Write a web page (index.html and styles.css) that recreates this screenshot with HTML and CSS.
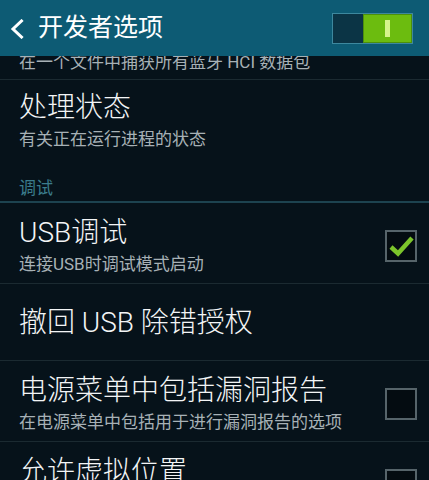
FILE: index.html
```html
<!DOCTYPE html>
<html lang="zh-CN">
<head>
<meta charset="utf-8">
<title>开发者选项</title>
<link rel="stylesheet" href="styles.css">
</head>
<body>
<div class="screen">
  <header class="appbar">
    <svg class="back" width="14" height="20" viewBox="0 0 14 20"><path d="M11.5 2 L3 10 L11.5 18" fill="none" stroke="#ffffff" stroke-width="3" stroke-linecap="square"/></svg>
    <h1 class="title">开发者选项</h1>
    <div class="switch">
      <div class="switch-off"></div>
      <div class="switch-on"><span class="switch-bar"></span></div>
    </div>
  </header>
  <div class="list">
    <div class="item clip-row">
      <div class="sub">在一个文件中捕获所有蓝牙 HCI 数据包</div>
    </div>
    <div class="item no-line">
      <div class="text">
        <div class="name">处理状态</div>
        <div class="sub">有关正在运行进程的状态</div>
      </div>
    </div>
    <div class="category">调试</div>
    <div class="item">
      <div class="text">
        <div class="name">USB调试</div>
        <div class="sub">连接USB时调试模式启动</div>
      </div>
      <div class="check">
        <svg width="28" height="28" viewBox="0 0 28 28"><path d="M4 15 L11 21.5 L25 6" fill="none" stroke="#7cc52b" stroke-width="4.5" stroke-linejoin="miter"/></svg>
      </div>
    </div>
    <div class="item single">
      <div class="text">
        <div class="name">撤回 USB 除错授权</div>
      </div>
    </div>
    <div class="item">
      <div class="text">
        <div class="name">电源菜单中包括漏洞报告</div>
        <div class="sub">在电源菜单中包括用于进行漏洞报告的选项</div>
      </div>
      <div class="check"></div>
    </div>
    <div class="item">
      <div class="text">
        <div class="name">允许虚拟位置</div>
        <div class="sub">允许模拟位置</div>
      </div>
      <div class="check"></div>
    </div>
  </div>
</div>
</body>
</html>
```
FILE: styles.css
```css
html, body {
  margin: 0;
  padding: 0;
  background: #06121a;
}
body {
  width: 429px;
  height: 480px;
  overflow: hidden;
  font-family: Roboto, "Noto Sans CJK SC", sans-serif;
}
.screen {
  width: 429px;
  height: 480px;
  overflow: hidden;
  display: flex;
  flex-direction: column;
}
.appbar {
  position: relative;
  z-index: 2;
  flex: 0 0 56px;
  height: 56px;
  background: #0d5b74;
  display: flex;
  align-items: center;
  padding: 0 16px 0 10px;
  box-sizing: border-box;
}
.back {
  display: block;
  margin-top: 1px;
}
.title {
  margin: 0 0 0 14px;
  font-size: 25px;
  font-weight: 400;
  color: #ffffff;
  line-height: 30px;
  flex: 1;
}
.switch {
  display: flex;
  width: 81px;
  height: 31px;
  box-sizing: border-box;
  border: 1px solid #3d889e;
  background: #0b3445;
}
.switch-off {
  width: 30px;
}
.switch-on {
  flex: 1;
  background: #6cbc0f;
  border: 1px solid #4c8f0c;
  display: flex;
  align-items: center;
  justify-content: center;
}
.switch-bar {
  display: block;
  width: 5px;
  height: 17px;
  background: #d6f48c;
}
.list {
  flex: 1;
  overflow: hidden;
}
.item {
  display: flex;
  align-items: center;
  padding: 14px 12px 8px 19px;
  border-bottom: 1px solid #1b2a31;
}
.item.no-line {
  border-bottom: none;
  padding-top: 12px;
  padding-bottom: 0;
}
.item.single {
  padding-top: 23px;
  padding-bottom: 21px;
}
.clip-row {
  margin-top: -5px;
  padding-top: 0;
  padding-bottom: 6px;
}
.text {
  flex: 1;
  min-width: 0;
}
.name {
  font-size: 28px;
  font-weight: 300;
  line-height: 32px;
  color: #f3f5f6;
  margin-bottom: 4px;
  white-space: nowrap;
}
.single .name {
  margin-bottom: 0;
}
.sub {
  font-size: 17px;
  line-height: 22px;
  color: #a7b1b6;
  white-space: nowrap;
}
.category {
  font-size: 17px;
  line-height: 22px;
  color: #3b7c8c;
  padding: 27px 19px 2px;
  border-bottom: 2px solid #1d4350;
}
.check {
  flex: 0 0 32px;
  width: 32px;
  height: 32px;
  box-sizing: border-box;
  border: 2px solid #56646a;
  background: #040c11;
  display: flex;
  align-items: center;
  justify-content: center;
}
.check svg {
  display: block;
}
```
